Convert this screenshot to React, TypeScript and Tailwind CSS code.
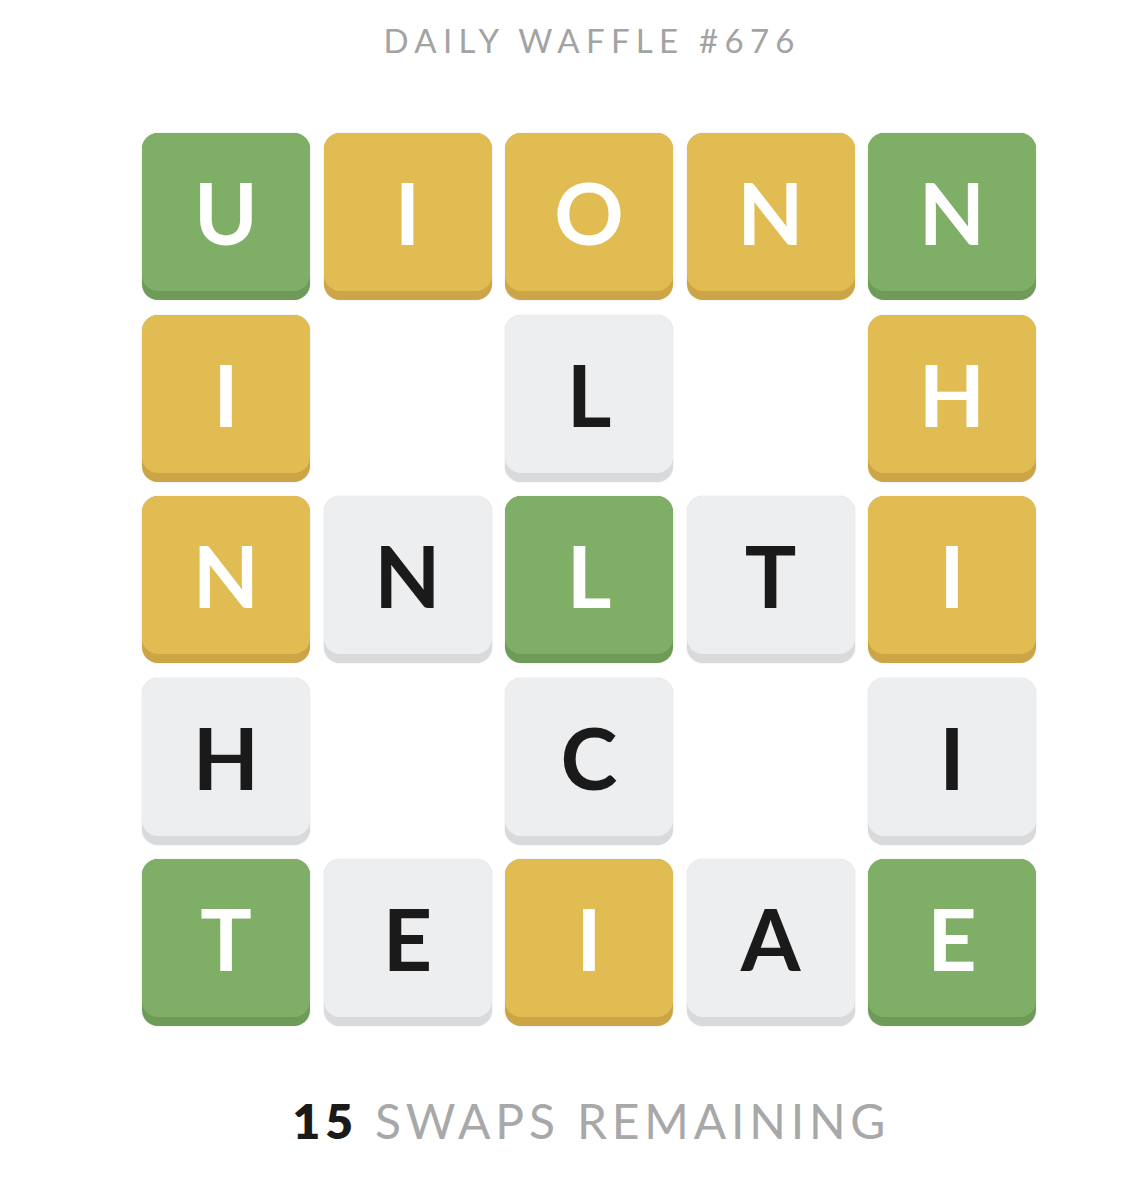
import React from 'react';

type Tone = 'green' | 'yellow' | 'white';

const tones: Record<Tone, { base: string; face: string; text: string }> = {
  green: { base: 'bg-[#6e9b58]', face: 'bg-[#7fae66]', text: 'text-white' },
  yellow: { base: 'bg-[#cca646]', face: 'bg-[#e1bc53]', text: 'text-white' },
  white: { base: 'bg-[#d9dadc]', face: 'bg-[#edeef0]', text: 'text-[#1a1a1a]' },
};

// null = empty hole in the waffle
const board: ([string, Tone] | null)[][] = [
  [['U', 'green'], ['I', 'yellow'], ['O', 'yellow'], ['N', 'yellow'], ['N', 'green']],
  [['I', 'yellow'], null, ['L', 'white'], null, ['H', 'yellow']],
  [['N', 'yellow'], ['N', 'white'], ['L', 'green'], ['T', 'white'], ['I', 'yellow']],
  [['H', 'white'], null, ['C', 'white'], null, ['I', 'white']],
  [['T', 'green'], ['E', 'white'], ['I', 'yellow'], ['A', 'white'], ['E', 'green']],
];

const Tile = ({ letter, tone }: { letter: string; tone: Tone }) => {
  const t = tones[tone];
  return (
    <div className={`h-[167px] w-[168px] rounded-[16px] ${t.base} shadow-[0_0_1.5px_rgba(0,0,0,0.18)]`}>
      <div
        className={`flex h-[158px] items-center justify-center rounded-[16px] ${t.face} ${t.text} text-[86px] font-bold leading-none`}
      >
        {letter}
      </div>
    </div>
  );
};

export default function App() {
  return (
    <div className="h-[1196px] w-[1132px] bg-white font-['Lato','Noto_Sans',sans-serif]">
      <div className="ml-[142px] flex w-[894px] flex-col items-center">
        <h1 className="mt-[23.5px] pl-[0.19em] text-[33px] font-normal leading-none tracking-[0.19em] text-[#a3a3a3]">
          DAILY WAFFLE #676
        </h1>

        <div className="mt-[76.5px] grid grid-cols-[repeat(5,168px)] gap-x-[13.5px] gap-y-[14.5px]">
          {board.flat().map((cell, i) =>
            cell ? <Tile key={i} letter={cell[0]} tone={cell[1]} /> : <div key={i} />
          )}
        </div>

        <p className="mt-[71px] pl-[0.1em] text-[48px] leading-none tracking-[0.1em] text-[#a8a8a8]">
          <span className="font-extrabold text-[#1a1a1a]">15</span> SWAPS REMAINING
        </p>
      </div>
    </div>
  );
}
